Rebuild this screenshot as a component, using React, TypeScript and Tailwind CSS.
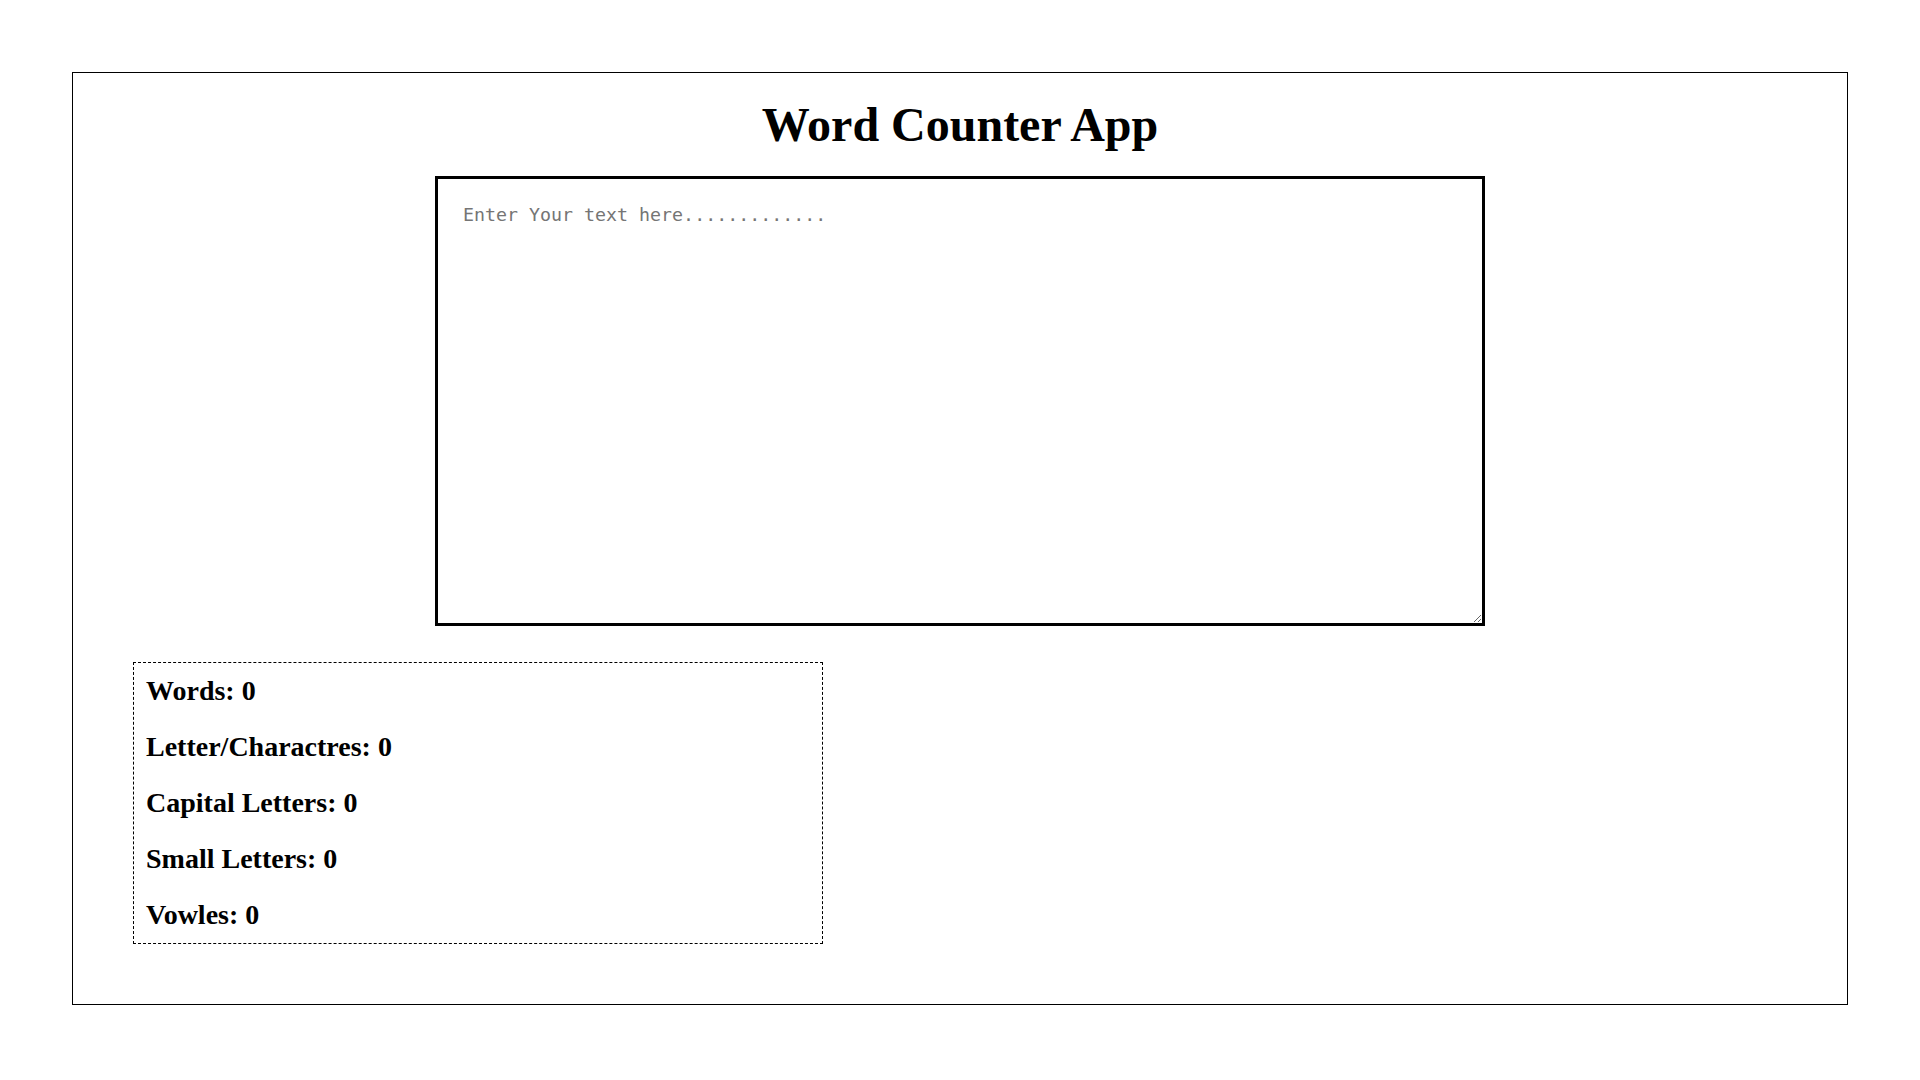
import { useState } from "react";

// 텍스트 통계 계산
function getStats(text: string) {
  const words = text.trim() === "" ? 0 : text.trim().split(/\s+/).length;
  const letters = text.replace(/\s/g, "").length;
  const capitals = (text.match(/[A-Z]/g) || []).length;
  const smalls = (text.match(/[a-z]/g) || []).length;
  const vowels = (text.match(/[aeiou]/gi) || []).length;
  return { words, letters, capitals, smalls, vowels };
}

export default function App() {
  const [text, setText] = useState("");
  const stats = getStats(text);

  const rows = [
    { label: "Words", value: stats.words },
    { label: "Letter/Charactres", value: stats.letters },
    { label: "Capital Letters", value: stats.capitals },
    { label: "Small Letters", value: stats.smalls },
    { label: "Vowles", value: stats.vowels },
  ];

  return (
    <div className="min-h-screen bg-white pt-[72px] text-black font-['Liberation_Serif',serif]">
      <div className="mx-auto w-[1776px] border border-black pt-[24px] pb-[60px]">
        <h1 className="text-center text-[48px] font-bold leading-[55px]">
          Word Counter App
        </h1>

        <textarea
          value={text}
          onChange={(e) => setText(e.target.value)}
          placeholder="Enter Your text here............."
          className="mx-auto mt-[24px] block h-[450px] w-[1050px] border-[3px] border-black px-[25px] pt-[25px] pb-[25px] text-[18.3px] leading-[21px] font-['DejaVu_Sans_Mono',monospace] outline-none placeholder:text-[#757575]"
        />

        <div className="ml-[60px] mt-[36px] flex w-[690px] flex-col gap-[24px] border border-dashed border-black pl-[12px] pr-[13px] pt-[12px] pb-[12px]">
          {rows.map((row) => (
            <p key={row.label} className="text-[28px] font-bold leading-[32px]">
              {row.label}: {row.value}
            </p>
          ))}
        </div>
      </div>
    </div>
  );
}
